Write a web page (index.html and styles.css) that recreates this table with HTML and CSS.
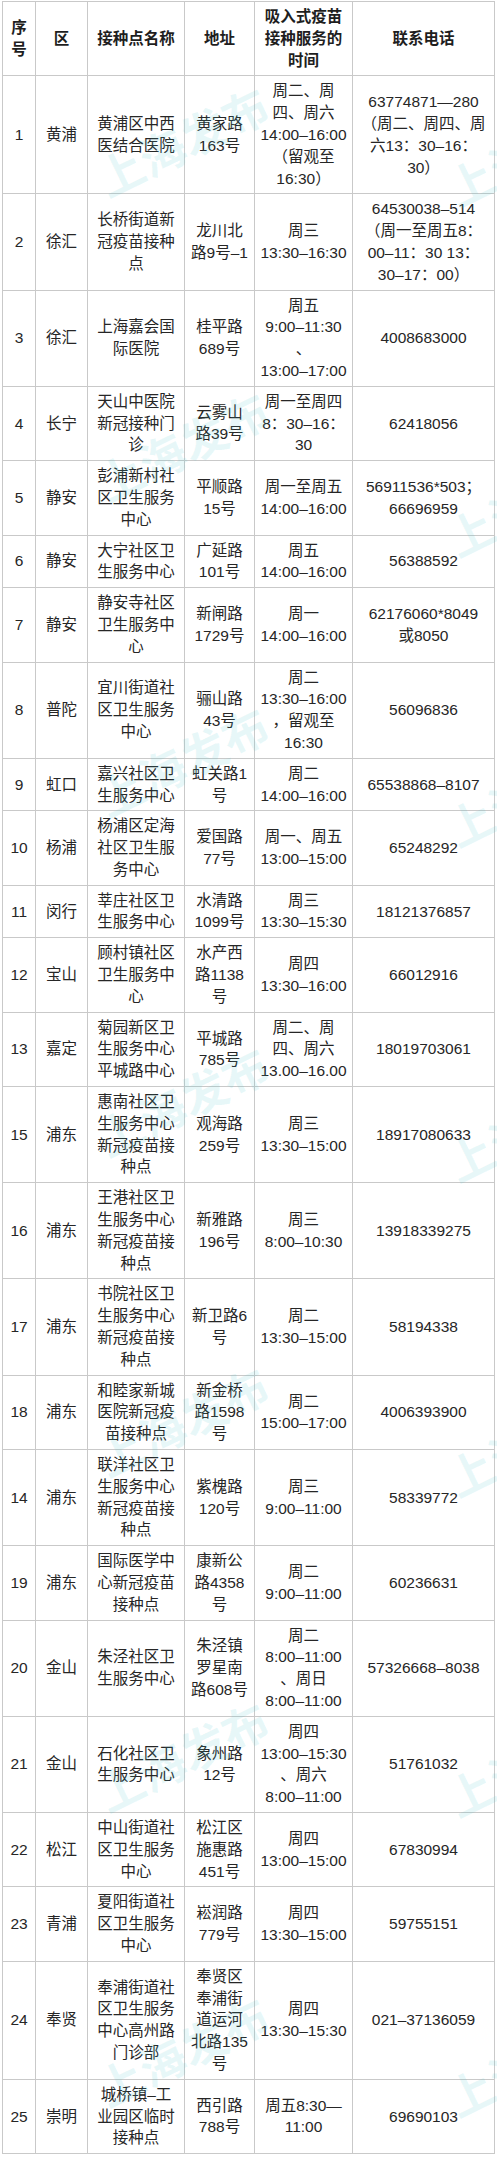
FILE: index.html
```html
<!DOCTYPE html>
<html lang="zh-CN">
<head>
<meta charset="utf-8">
<title>吸入式疫苗接种点</title>
<link rel="stylesheet" href="styles.css">
</head>
<body>
<div class="page">
<table class="sheet">
<colgroup>
<col class="c-no"><col class="c-dist"><col class="c-name"><col class="c-addr"><col class="c-time"><col class="c-tel">
</colgroup>
<thead>
<tr><th>序<br>号</th><th>区</th><th>接种点名称</th><th>地址</th><th>吸入式疫苗<br>接种服务的<br>时间</th><th>联系电话</th></tr>
</thead>
<tbody>
<tr><td>1</td><td>黄浦</td><td>黄浦区中西<br>医结合医院</td><td>黄家路<br>163号</td><td>周二、周<br>四、周六<br>14:00–16:00<br>（留观至<br>16:30）</td><td>63774871—280<br>（周二、周四、周<br>六13：30–16：<br>30）</td></tr>
<tr><td>2</td><td>徐汇</td><td>长桥街道新<br>冠疫苗接种<br>点</td><td>龙川北<br>路9号–1</td><td>周三<br>13:30–16:30</td><td>64530038–514<br>（周一至周五8：<br>00–11：30 13：<br>30–17：00）</td></tr>
<tr><td>3</td><td>徐汇</td><td>上海嘉会国<br>际医院</td><td>桂平路<br>689号</td><td>周五<br>9:00–11:30<br>、<br>13:00–17:00</td><td>4008683000</td></tr>
<tr><td>4</td><td>长宁</td><td>天山中医院<br>新冠接种门<br>诊</td><td>云雾山<br>路39号</td><td>周一至周四<br>8：30–16：<br>30</td><td>62418056</td></tr>
<tr><td>5</td><td>静安</td><td>彭浦新村社<br>区卫生服务<br>中心</td><td>平顺路<br>15号</td><td>周一至周五<br>14:00–16:00</td><td>56911536*503；<br>66696959</td></tr>
<tr><td>6</td><td>静安</td><td>大宁社区卫<br>生服务中心</td><td>广延路<br>101号</td><td>周五<br>14:00–16:00</td><td>56388592</td></tr>
<tr><td>7</td><td>静安</td><td>静安寺社区<br>卫生服务中<br>心</td><td>新闸路<br>1729号</td><td>周一<br>14:00–16:00</td><td>62176060*8049<br>或8050</td></tr>
<tr><td>8</td><td>普陀</td><td>宜川街道社<br>区卫生服务<br>中心</td><td>骊山路<br>43号</td><td>周二<br>13:30–16:00<br>，留观至<br>16:30</td><td>56096836</td></tr>
<tr><td>9</td><td>虹口</td><td>嘉兴社区卫<br>生服务中心</td><td>虹关路1<br>号</td><td>周二<br>14:00–16:00</td><td>65538868–8107</td></tr>
<tr><td>10</td><td>杨浦</td><td>杨浦区定海<br>社区卫生服<br>务中心</td><td>爱国路<br>77号</td><td>周一、周五<br>13:00–15:00</td><td>65248292</td></tr>
<tr><td>11</td><td>闵行</td><td>莘庄社区卫<br>生服务中心</td><td>水清路<br>1099号</td><td>周三<br>13:30–15:30</td><td>18121376857</td></tr>
<tr><td>12</td><td>宝山</td><td>顾村镇社区<br>卫生服务中<br>心</td><td>水产西<br>路1138<br>号</td><td>周四<br>13:30–16:00</td><td>66012916</td></tr>
<tr><td>13</td><td>嘉定</td><td>菊园新区卫<br>生服务中心<br>平城路中心</td><td>平城路<br>785号</td><td>周二、周<br>四、周六<br>13.00–16.00</td><td>18019703061</td></tr>
<tr><td>15</td><td>浦东</td><td>惠南社区卫<br>生服务中心<br>新冠疫苗接<br>种点</td><td>观海路<br>259号</td><td>周三<br>13:30–15:00</td><td>18917080633</td></tr>
<tr><td>16</td><td>浦东</td><td>王港社区卫<br>生服务中心<br>新冠疫苗接<br>种点</td><td>新雅路<br>196号</td><td>周三<br>8:00–10:30</td><td>13918339275</td></tr>
<tr><td>17</td><td>浦东</td><td>书院社区卫<br>生服务中心<br>新冠疫苗接<br>种点</td><td>新卫路6<br>号</td><td>周二<br>13:30–15:00</td><td>58194338</td></tr>
<tr><td>18</td><td>浦东</td><td>和睦家新城<br>医院新冠疫<br>苗接种点</td><td>新金桥<br>路1598<br>号</td><td>周二<br>15:00–17:00</td><td>4006393900</td></tr>
<tr><td>14</td><td>浦东</td><td>联洋社区卫<br>生服务中心<br>新冠疫苗接<br>种点</td><td>紫槐路<br>120号</td><td>周三<br>9:00–11:00</td><td>58339772</td></tr>
<tr><td>19</td><td>浦东</td><td>国际医学中<br>心新冠疫苗<br>接种点</td><td>康新公<br>路4358<br>号</td><td>周二<br>9:00–11:00</td><td>60236631</td></tr>
<tr><td>20</td><td>金山</td><td>朱泾社区卫<br>生服务中心</td><td>朱泾镇<br>罗星南<br>路608号</td><td>周二<br>8:00–11:00<br>、周日<br>8:00–11:00</td><td>57326668–8038</td></tr>
<tr><td>21</td><td>金山</td><td>石化社区卫<br>生服务中心</td><td>象州路<br>12号</td><td>周四<br>13:00–15:30<br>、周六<br>8:00–11:00</td><td>51761032</td></tr>
<tr><td>22</td><td>松江</td><td>中山街道社<br>区卫生服务<br>中心</td><td>松江区<br>施惠路<br>451号</td><td>周四<br>13:00–15:00</td><td>67830994</td></tr>
<tr><td>23</td><td>青浦</td><td>夏阳街道社<br>区卫生服务<br>中心</td><td>崧润路<br>779号</td><td>周四<br>13:30–15:00</td><td>59755151</td></tr>
<tr><td>24</td><td>奉贤</td><td>奉浦街道社<br>区卫生服务<br>中心高州路<br>门诊部</td><td>奉贤区<br>奉浦街<br>道运河<br>北路135<br>号</td><td>周四<br>13:30–15:30</td><td>021–37136059</td></tr>
<tr><td>25</td><td>崇明</td><td>城桥镇–工<br>业园区临时<br>接种点</td><td>西引路<br>788号</td><td>周五8:30—<br>11:00</td><td>69690103</td></tr>
</tbody>
</table>
<div class="watermarks" aria-hidden="true">
<span class="wm wm-a1">上海发布</span><span class="wm wm-b1">上海发布</span>
<span class="wm wm-a2">上海发布</span><span class="wm wm-b2">上海发布</span>
<span class="wm wm-a3">上海发布</span><span class="wm wm-b3">上海发布</span>
<span class="wm wm-a4">上海发布</span><span class="wm wm-b4">上海发布</span>
<span class="wm wm-a5">上海发布</span><span class="wm wm-b5">上海发布</span>
<span class="wm wm-a6">上海发布</span><span class="wm wm-b6">上海发布</span>
<span class="wm wm-a7">上海发布</span><span class="wm wm-b7">上海发布</span>
</div>
</div>
</body>
</html>
```
FILE: styles.css
```css
html, body {
  margin: 0;
  padding: 0;
  background: #ffffff;
}
body {
  font-family: "Liberation Sans", "Noto Sans CJK SC", sans-serif;
  color: #262626;
}
.page {
  position: relative;
  width: 497px;
  padding: 1px 0 0 2px;
  box-sizing: border-box;
  overflow: hidden;
}
.sheet {
  border-collapse: collapse;
  table-layout: fixed;
  width: 492px;
  font-size: 15.5px;
  line-height: 21.8px;
}
.c-no { width: 33px; }
.c-dist { width: 52px; }
.c-name { width: 97px; }
.c-addr { width: 70px; }
.c-time { width: 98px; }
.c-tel { width: 142px; }
.sheet th,
.sheet td {
  border: 1px solid #c9c9c9;
  padding: 4px 0;
  text-align: center;
  vertical-align: middle;
  white-space: nowrap;
  overflow: hidden;
}
.sheet th {
  font-weight: 700;
  color: #1e1e1e;
}
.watermarks {
  position: absolute;
  inset: 0;
  pointer-events: none;
}
.wm {
  position: absolute;
  width: 200px;
  margin-left: -100px;
  margin-top: -30px;
  text-align: center;
  font-family: "Noto Sans CJK SC", sans-serif;
  font-size: 46px;
  line-height: 60px;
  font-weight: 700;
  color: rgba(70, 195, 205, 0.12);
  transform: rotate(-26deg);
  white-space: nowrap;
}
.wm-a1 { left: 182px; top: 140px; }
.wm-b1 { left: 532px; top: 150px; }
.wm-a2 { left: 182px; top: 445px; }
.wm-b2 { left: 532px; top: 500px; }
.wm-a3 { left: 182px; top: 760px; }
.wm-b3 { left: 532px; top: 790px; }
.wm-a4 { left: 182px; top: 1100px; }
.wm-b4 { left: 532px; top: 1125px; }
.wm-a5 { left: 182px; top: 1420px; }
.wm-b5 { left: 532px; top: 1440px; }
.wm-a6 { left: 182px; top: 1755px; }
.wm-b6 { left: 532px; top: 1760px; }
.wm-a7 { left: 182px; top: 2050px; }
.wm-b7 { left: 532px; top: 2060px; }
```
